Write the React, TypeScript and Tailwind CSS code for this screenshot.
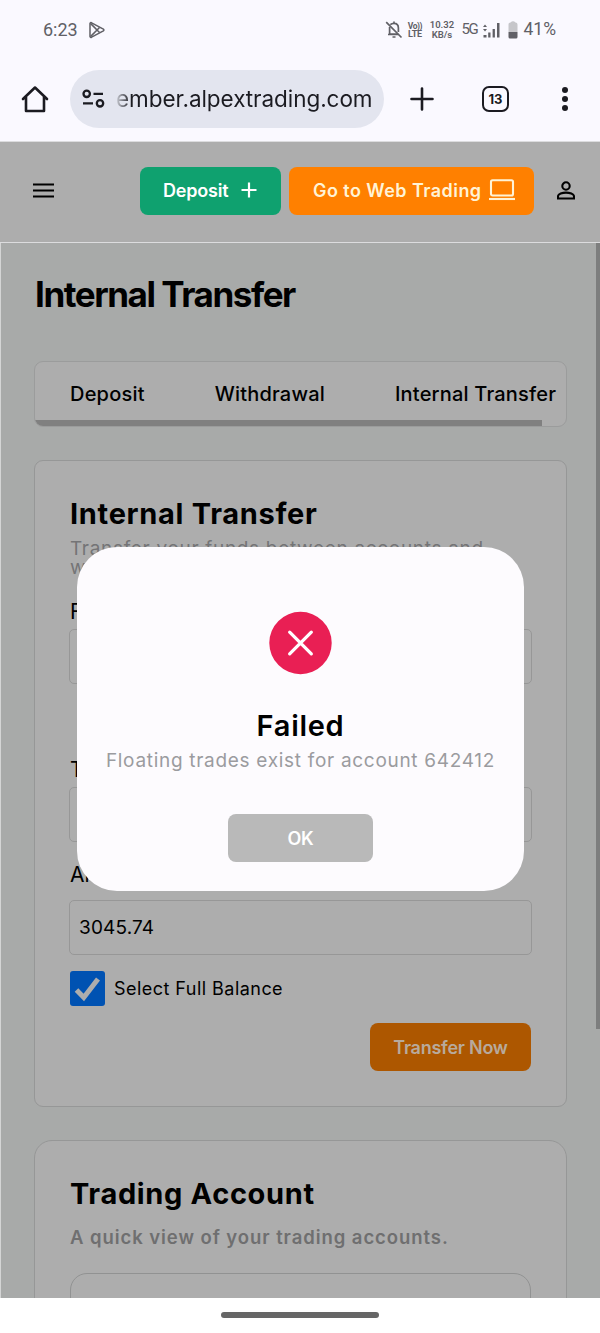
const tabs = ["Deposit", "Withdrawal", "Internal Transfer"];

const StatusBar = () => (
  <div className="flex h-[60px] items-center justify-between pb-px pl-[43px] pr-[44px] font-[Roboto,sans-serif] text-[#606066]">
    <div className="flex items-center">
      <span className="text-[18px] leading-none">6:23</span>
      <svg width="18" height="18" viewBox="0 0 18 18" className="ml-[10px]" fill="none" stroke="currentColor" strokeWidth="1.5" strokeLinejoin="round">
        <path d="M2 2.4v13.2q.3 1.2 1.6.6l11.8-6.4q1-.8 0-1.6L3.6 1.8Q2.3 1.2 2 2.4Z" />
        <path d="m2.5 2.4 9 9.1M2.5 15.6l9-9.1" />
      </svg>
    </div>
    <div className="flex items-center leading-none">
      <svg width="18" height="20" viewBox="0 0 18 20" fill="none" stroke="currentColor" strokeWidth="1.7">
        <path d="M5.3 4.7C6.2 3.8 7.4 3.3 9 3.3c3 0 4.4 2 4.4 4.7v4M4.6 7v7.2h8.6M3 14.5h10M9 1.5v2" />
        <path d="M1.2 2.2 16.5 17.5M7.5 17h3" />
      </svg>
      <span className="ml-[4px] flex w-[15px] flex-col items-center text-[8.5px] font-bold leading-[8px]">
        <span className="tracking-[-0.5px]">Vo))</span>
        <span className="text-[9px] tracking-[-0.2px]">LTE</span>
      </span>
      <span className="ml-[7px] flex w-[25px] flex-col items-center text-[9.5px] font-semibold leading-[10px]">
        <span>10.32</span>
        <span>KB/s</span>
      </span>
      <span className="ml-[7px] text-[15px] tracking-[-1.3px]">5G</span>
      <svg width="17" height="16" viewBox="0 0 17 16" className="ml-[5px]" fill="currentColor">
        <path d="M0 5 2 2.5 4 5ZM0 7h4L2 9.5ZM.5 13h3v2.5h-3ZM5.2 10.5h2.3v5H5.2ZM9.6 7h2.3v8.5H9.6ZM14 1h2.5v14.5H14Z" />
      </svg>
      <svg width="10" height="18" viewBox="0 0 10 18" className="ml-[8px]">
        <path d="M2.5 1.5Q5-.8 7.5 1.5 9.5 1.5 9.5 3.5V11H.5V3.5Q.5 1.5 2.5 1.5Z" fill="#c6c6ca" />
        <path d="M.5 11h9v5q0 1.5-1.5 1.5H2Q.5 17.5.5 16Z" fill="#606066" />
      </svg>
      <span className="ml-[6px] text-[17.5px]">41%</span>
    </div>
  </div>
);

const BrowserBar = () => (
  <div className="flex h-[81px] items-start pt-[10px] text-[#1b1b21]">
    <svg width="28" height="28" viewBox="0 0 28 28" className="ml-[21px] mt-[15px]" fill="none" stroke="currentColor" strokeWidth="2.6" strokeLinejoin="round" strokeLinecap="round">
      <path d="M2 14 14 2.5 26 14M5 12v14h18V12" />
    </svg>
    <div className="ml-[21px] flex h-[58px] w-[314px] items-center rounded-full bg-[#e3e5ef] pl-[12px]">
      <svg width="24" height="20" viewBox="0 0 24 20" fill="none" stroke="currentColor" strokeWidth="2.3">
        <circle cx="4.7" cy="4.8" r="3.2" />
        <path d="M11.5 4.8H21M1 14.3h10" />
        <circle cx="18" cy="14.3" r="3.2" />
      </svg>
      <span className="ml-[10px] whitespace-nowrap bg-gradient-to-r from-[#d0d2da] from-0% via-[#1b1b21] via-6% to-[#1b1b21] bg-clip-text font-[Inter,sans-serif] text-[22.5px] tracking-[-0.06px] text-transparent">
        ember.alpextrading.com
      </span>
    </div>
    <svg width="24" height="24" viewBox="0 0 24 24" className="ml-[26px] mt-[17px]" stroke="currentColor" strokeWidth="2.6" strokeLinecap="round">
      <path d="M12 1.5v21M1.5 12h21" />
    </svg>
    <div className="ml-[48px] mt-[16px] flex h-[26px] w-[27px] items-center justify-center rounded-[7px] border-[2.5px] border-current font-[Inter,sans-serif] text-[13px] font-bold leading-none">
      13
    </div>
    <svg width="8" height="26" viewBox="0 0 8 26" className="ml-[52px] mt-[16px]" fill="currentColor">
      <circle cx="4" cy="4" r="3" />
      <circle cx="4" cy="13" r="3" />
      <circle cx="4" cy="22" r="3" />
    </svg>
  </div>
);

const Header = () => (
  <header className="flex h-[102px] items-center border-y-[1.5px] border-[#dcdcde] bg-[#adadad] pb-[2px]">
    <svg width="21" height="15" viewBox="0 0 21 15" className="-mt-px ml-[33px]" stroke="#000" strokeWidth="2.1">
      <path d="M0 1.5h21M0 7.5h21M0 13.5h21" />
    </svg>
    <button className="ml-[86px] flex h-[48px] w-[141px] items-center rounded-[8px] bg-[#0fa16f] pb-[2px] pl-[23px] text-[18px] font-semibold text-white">
      <span className="tracking-[-0.2px]">Deposit</span>
      <svg width="16" height="16" viewBox="0 0 16 16" className="ml-[13px]" stroke="currentColor" strokeWidth="2.2">
        <path d="M8 .5v15M.5 8h15" />
      </svg>
    </button>
    <button className="ml-[8px] flex h-[48px] w-[245px] items-center whitespace-nowrap rounded-[8px] bg-[#ff8000] pb-[2px] pl-[24px] text-[18px] font-semibold text-[#fff3d6]">
      <span className="tracking-[0.45px]">Go to Web Trading</span>
      <svg width="26" height="22" viewBox="0 0 26 22" className="ml-[7px]" fill="none" stroke="currentColor" strokeWidth="2.1">
        <rect x="2" y="1.2" width="22" height="15.3" rx="1.5" />
        <path d="M0 20h26" />
      </svg>
    </button>
    <svg width="18" height="19" viewBox="0 0 18 19" className="-mt-px ml-[23px]" fill="none" stroke="#000" strokeWidth="2.1">
      <circle cx="9" cy="5" r="3.7" />
      <path d="M1 17.5v-2.2c0-2.3 4.5-3.7 8-3.7s8 1.4 8 3.7v2.2Z" />
    </svg>
  </header>
);

const Tabs = () => (
  <nav className="mt-[46px] flex h-[66px] flex-col justify-between overflow-hidden rounded-[9px] border border-[#9b9c9c] bg-[#adadad]">
    <div className="flex gap-[70px] whitespace-nowrap pl-[35px] pt-[17px] text-[20px] font-medium leading-[30px] tracking-[0.2px]">
      {tabs.map((tab) => (
        <span key={tab}>{tab}</span>
      ))}
    </div>
    <div className="h-[6px] w-[507px] shrink-0 bg-[#808080]" />
  </nav>
);

type FieldProps = { label: string; value?: string; className: string; boxClassName?: string };

const Field = ({ label, value, className, boxClassName = "mt-[4px]" }: FieldProps) => (
  <div className={className}>
    <label className="block text-[21px] leading-[26px]">{label}</label>
    <div className={boxClassName}>
      <div className="-ml-px flex h-[55px] w-[463px] items-center rounded-[5px] border border-[#979797] pl-[9px] pt-[2px] text-[19px] tracking-[0.15px]">
        {value}
      </div>
    </div>
  </div>
);

const TransferCard = () => (
  <section className="mt-[33px] h-[647px] rounded-[9px] border border-[#969797] bg-[#adadad] pl-[35px] pr-[35px] pt-[35px]">
    <h2 className="text-[29px] font-bold leading-[36px] tracking-[0.7px]">Internal Transfer</h2>
    <p className="mt-[7px] w-[440px] text-[19px] leading-[19px] tracking-[0.68px] text-[#747476]">
      Transfer your funds between accounts and wallets
    </p>
    <Field label="From" className="mt-[22px]" />
    <Field label="To" className="mt-[73px]" />
    <Field label="Amount" value="3045.74" className="mt-[20px]" boxClassName="mt-[12px]" />
    <div className="mt-[16px] flex items-center">
      <span className="flex size-[35px] items-center justify-center rounded-[3px] bg-[#0052b2]">
        <svg width="27" height="26" viewBox="0 0 27 26" fill="none" stroke="#adadad" strokeWidth="5">
          <path d="m2.5 14 7.3 7.5L24 3" />
        </svg>
      </span>
      <span className="ml-[9px] text-[18px] tracking-[0.46px]">Select Full Balance</span>
    </div>
    <div className="mt-[17px] flex justify-end">
      <button className="h-[48px] w-[161px] rounded-[8px] bg-[#ad5700] text-[18px] font-semibold tracking-[-0.25px] text-[#b8aa9c]">
        Transfer Now
      </button>
    </div>
  </section>
);

const AccountCard = () => (
  <section className="mt-[33px] h-[300px] rounded-[18px] border border-[#969797] bg-[#adadad] px-[35px] pt-[35px]">
    <h2 className="text-[29px] font-bold leading-[36px] tracking-[0.65px]">Trading Account</h2>
    <p className="mt-[12px] text-[18.5px] font-semibold leading-[26px] tracking-[0.93px] text-[#6f6f70]">
      A quick view of your trading accounts.
    </p>
    <div className="mt-[23px] h-[120px] rounded-[17px] border border-[#919292]" />
  </section>
);

const FailedDialog = () => (
  <div className="absolute left-[77px] top-[547px] flex h-[344px] w-[447px] flex-col items-center rounded-[40px] bg-[#fdfbfe]">
    <svg width="63" height="64" viewBox="0 0 64 64" className="mt-[64px]">
      <circle cx="32" cy="32" r="31.7" fill="#e91f54" />
      <path d="m21 21 22 22M43 21 21 43" stroke="#fff" strokeWidth="3.3" strokeLinecap="round" />
    </svg>
    <h3 className="mt-[33px] text-[29px] font-semibold leading-[36px] tracking-[0.7px]">Failed</h3>
    <p className="mt-[4px] whitespace-nowrap text-[19px] leading-[26px] tracking-[0.7px] text-[#9b9b9f]">
      Floating trades exist for account 642412
    </p>
    <button className="mt-[40px] h-[48px] w-[145px] rounded-[8px] bg-[#b9b9b9] text-[18px] font-semibold tracking-[-0.2px] text-white">
      OK
    </button>
  </div>
);

export default function App() {
  return (
    <div className="relative flex h-[1333px] w-[600px] flex-col overflow-hidden bg-[#faf9ff] font-[Inter,sans-serif] text-black">
      <StatusBar />
      <BrowserBar />
      <Header />
      <main className="flex h-[1055px] overflow-hidden border-l border-[#d4d5d5] bg-[#a8aaa9]">
        <div className="ml-[33px] w-[533px] shrink-0">
          <h1 className="ml-px mt-[30px] text-[35px] font-bold leading-[42px] tracking-[-1.45px]">Internal Transfer</h1>
          <Tabs />
          <TransferCard />
          <AccountCard />
        </div>
        <div className="ml-auto h-[786px] w-[4px] bg-[#7d7e7e]" />
      </main>
      <footer className="flex h-[35px] items-center justify-center bg-white pb-[2px]">
        <div className="h-[6px] w-[158px] rounded-full bg-[#666]" />
      </footer>
      <FailedDialog />
    </div>
  );
}
